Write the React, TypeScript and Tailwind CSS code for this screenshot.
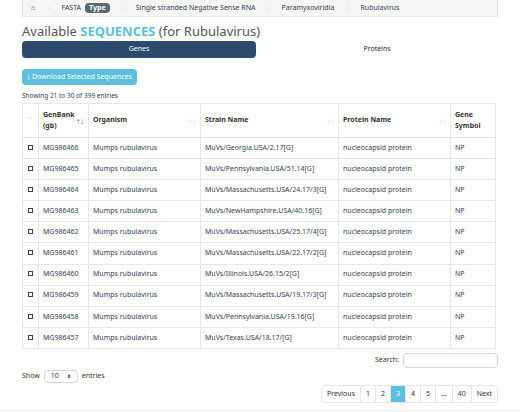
const rows = [
  ["MG986466", "MuVs/Georgia.USA/2.17[G]"],
  ["MG986465", "MuVs/Pennsylvania.USA/51.14[G]"],
  ["MG986464", "MuVs/Massachusetts.USA/24.17/3[G]"],
  ["MG986463", "MuVs/NewHampshire.USA/40.16[G]"],
  ["MG986462", "MuVs/Massachusetts.USA/25.17/4[G]"],
  ["MG986461", "MuVs/Massachusetts.USA/22.17/2[G]"],
  ["MG986460", "MuVs/Illinois.USA/26.15/2[G]"],
  ["MG986459", "MuVs/Massachusetts.USA/19.17/3[G]"],
  ["MG986458", "MuVs/Pennsylvania.USA/19.16[G]"],
  ["MG986457", "MuVs/Texas.USA/18.17/[G]"],
];

const Sort = ({ active }: { active?: boolean }) => (
  <span className={`text-[8px] ${active ? "text-gray-600" : "text-gray-300"}`}>↑↓</span>
);

export default function App() {
  return (
    <div className="w-[520px] h-[412px] overflow-hidden bg-white text-[#333] font-['Liberation_Sans',Arial,sans-serif] relative">
      <div className="mx-[22px] h-[17px] border border-t-0 border-gray-200 bg-[#f5f5f5] flex items-center gap-3 px-2 text-[7px] text-gray-700">
        <span>⌂</span>
        <span className="text-gray-300">›</span>
        <span className="flex items-center gap-1">FASTA <span className="bg-[#5a6775] text-white font-bold px-1 rounded-sm">Type</span></span>
        <span className="text-gray-300">›</span>
        <span>Single stranded Negative Sense RNA</span>
        <span className="text-gray-300">›</span>
        <span>Paramyxoviridia</span>
        <span className="text-gray-300">›</span>
        <span>Rubulavirus</span>
      </div>
      <div className="px-[22px]">
        <div className="mt-[6px] text-[13px] text-[#555] leading-[16px]">
          Available <span className="text-[#5bc0de] font-bold">SEQUENCES</span> (for Rubulavirus)
        </div>
        <div className="mt-[2px] flex h-[17px] text-[7px]">
          <div className="w-[234px] bg-[#2c4a6b] text-white rounded-sm flex items-center justify-center">Genes</div>
          <div className="flex-1 flex items-center justify-center text-gray-800">Proteins</div>
        </div>
        <div className="mt-[11px] w-[115px] h-[16px] bg-[#5bc0de] rounded-sm text-white text-[7px] flex items-center justify-center">⤓ Download Selected Sequences</div>
        <div className="mt-[6px] text-[6.5px] text-gray-700 h-[10px]">Showing 21 to 30 of 399 entries</div>
        <table className="mt-[2px] w-[473px] border-collapse text-[7px] table-fixed">
          <colgroup>
            <col className="w-[16px]" /><col className="w-[50px]" /><col className="w-[112px]" />
            <col className="w-[138px]" /><col className="w-[112px]" /><col className="w-[45px]" />
          </colgroup>
          <thead>
            <tr className="h-[34px] font-bold text-left">
              <th className="border border-gray-200 text-center text-gray-300 font-normal text-[6px]">⌃</th>
              <th className="border border-gray-200 px-1"><div className="flex justify-between items-center"><span>GenBank<br />(gb)</span><Sort active /></div></th>
              <th className="border border-gray-200 px-1"><div className="flex justify-between"><span>Organism</span><Sort /></div></th>
              <th className="border border-gray-200 px-1"><div className="flex justify-between"><span>Strain Name</span><Sort /></div></th>
              <th className="border border-gray-200 px-1"><div className="flex justify-between"><span>Protein Name</span><Sort /></div></th>
              <th className="border border-gray-200 px-1">Gene<br />Symbol</th>
            </tr>
          </thead>
          <tbody>
            {rows.map(([id, strain]) => (
              <tr key={id} className="h-[21.1px] text-gray-700">
                <td className="border border-gray-200 text-center"><span className="inline-block w-[5px] h-[5px] border border-[#2c4a6b]" /></td>
                <td className="border border-gray-200 px-1">{id}</td>
                <td className="border border-gray-200 px-1">Mumps rubulavirus</td>
                <td className="border border-gray-200 px-1">{strain}</td>
                <td className="border border-gray-200 px-1">nucleocapsid protein</td>
                <td className="border border-gray-200 px-1">NP</td>
              </tr>
            ))}
          </tbody>
        </table>
        <div className="mt-[4px] flex justify-end items-center gap-1 text-[7px]">
          Search: <div className="w-[95px] h-[15px] border border-gray-300 rounded-sm" />
        </div>
        <div className="mt-[2px] flex items-center gap-1 text-[7px]">
          Show <span className="border border-gray-300 rounded-sm px-1.5 h-[13px] flex items-center gap-2">10 <span className="text-[5px]">⬍</span></span> entries
        </div>
        <div className="mt-[2px] flex justify-end">
          <div className="flex border border-gray-200 rounded-sm text-[7px] h-[18px]">
            {["Previous", "1", "2", "3", "4", "5", "…", "40", "Next"].map((p) => (
              <span key={p} className={`px-[5px] flex items-center border-r border-gray-200 last:border-r-0 ${p === "3" ? "bg-[#5bc0de] text-white" : ""}`}>{p}</span>
            ))}
          </div>
        </div>
      </div>
      <div className="absolute bottom-0 left-0 right-0 h-[3px] bg-gray-100" />
    </div>
  );
}
